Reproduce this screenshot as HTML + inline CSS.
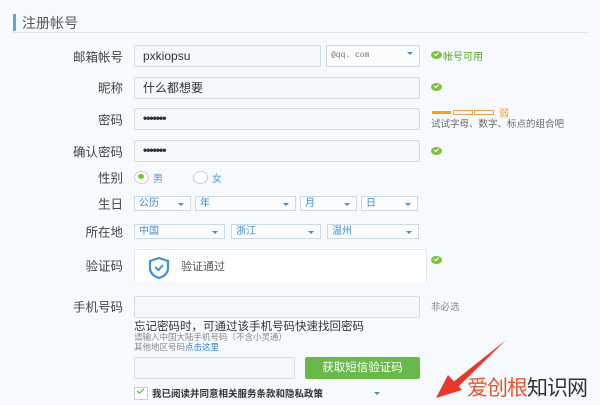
<!DOCTYPE html>
<html><head><meta charset="utf-8"><style>
body{margin:0;width:600px;height:405px;overflow:hidden;background:#f6fafd;font-family:"Liberation Sans","Noto Sans CJK SC",sans-serif;position:relative;color:#333}
.a{position:absolute}
.lbl{position:absolute;right:477px;font-size:12.5px;color:#444;white-space:nowrap;transform:translateY(-50%)}
.in{position:absolute;border:1px solid #d4dce4;background:#f5f8fb;border-radius:2px;box-sizing:border-box;font-size:12px;padding-left:8px}
.sel{position:absolute;border:1px solid #cfd9e3;background:#fafcfe;box-sizing:border-box;font-size:10px;color:#3a8fd0;padding-left:4px;line-height:14px}
.sel:after{content:"";position:absolute;right:6px;top:6px;border:3px solid transparent;border-top:3px solid #3a8fd0}
.ok{position:absolute;width:11px;height:8px;border-radius:50%;background:#7cc23a}
.ok:after{content:"";position:absolute;left:3px;top:1px;width:4px;height:2px;border-left:1.5px solid #fff;border-bottom:1.5px solid #fff;transform:rotate(-45deg)}
</style></head><body>
<div class="a" style="left:13px;top:14px;width:3px;height:17px;background:#5aa9e0"></div>
<div class="a" style="left:22px;top:13px;font-size:14px;color:#555">注册帐号</div>
<div class="a" style="left:13px;top:32px;width:577px;height:1px;background:#e2e8ee"></div>

<div class="lbl" style="top:56px">邮箱帐号</div>
<div class="in" style="left:134px;top:45px;width:187px;height:22px;line-height:20px;font-size:12px">pxkiopsu</div>
<div class="sel" style="left:326px;top:45px;width:94px;height:22px;line-height:20px;color:#777;font-size:8px;font-family:'Liberation Mono',monospace">@qq. com</div>
<div class="ok" style="left:431px;top:51px"></div>
<div class="a" style="left:443px;top:48px;font-size:10px;color:#5aa520">帐号可用</div>

<div class="lbl" style="top:87px">昵称</div>
<div class="in" style="left:134px;top:77px;width:286px;height:22px;line-height:20px">什么都想要</div>
<div class="ok" style="left:431px;top:83px"></div>

<div class="lbl" style="top:119px">密码</div>
<div class="in" style="left:134px;top:108px;width:286px;height:22px;line-height:18px;font-weight:bold;letter-spacing:-1px">•••••••</div>
<div class="a" style="left:432px;top:111px;width:19px;height:3px;background:#f39a3c"></div>
<div class="a" style="left:453px;top:110px;width:18px;height:3px;border:1px solid #f3a04a"></div>
<div class="a" style="left:474px;top:110px;width:18px;height:3px;border:1px solid #f3a04a"></div>
<div class="a" style="left:499px;top:105px;font-size:10px;color:#f39a3c">弱</div>
<div class="a" style="left:431px;top:116px;font-size:9.5px;color:#666;white-space:nowrap">试试字母、数字、标点的组合吧</div>

<div class="lbl" style="top:151px">确认密码</div>
<div class="in" style="left:134px;top:140px;width:286px;height:22px;line-height:18px;font-weight:bold;letter-spacing:-1px">•••••••</div>
<div class="ok" style="left:431px;top:147px"></div>

<div class="lbl" style="top:177px">性别</div>
<div class="a" style="left:134px;top:171px;width:13px;height:11px;border-radius:50%;border:1px solid #ccd;background:#fff"></div>
<div class="a" style="left:138px;top:174px;width:6px;height:5px;border-radius:50%;background:#6cc530"></div>
<div class="a" style="left:153px;top:170px;font-size:10px;color:#5a9bd0">男</div>
<div class="a" style="left:193px;top:171px;width:13px;height:11px;border-radius:50%;border:1px solid #ccd;background:#fff"></div>
<div class="a" style="left:212px;top:170px;font-size:10px;color:#5a9bd0">女</div>

<div class="lbl" style="top:203px">生日</div>
<div class="sel" style="left:134px;top:196px;width:57px;height:15px">公历</div>
<div class="sel" style="left:195px;top:196px;width:101px;height:15px">年</div>
<div class="sel" style="left:300px;top:196px;width:57px;height:15px">月</div>
<div class="sel" style="left:361px;top:196px;width:57px;height:15px">日</div>

<div class="lbl" style="top:231px">所在地</div>
<div class="sel" style="left:134px;top:224px;width:91px;height:15px">中国</div>
<div class="sel" style="left:231px;top:224px;width:90px;height:15px">浙江</div>
<div class="sel" style="left:327px;top:224px;width:92px;height:15px">温州</div>

<div class="lbl" style="top:265px">验证码</div>
<div class="a" style="left:134px;top:249px;width:291px;height:32px;background:#fff;border:1px solid #e4e8ec;border-bottom:none"></div>
<svg class="a" style="left:147px;top:256px" width="24" height="24" viewBox="0 0 24 24"><path d="M3 5 L12 2 L21 5 L21 12 Q21 19 12 22 Q3 19 3 12 Z" fill="none" stroke="#3a8fe0" stroke-width="2.2"/><path d="M8 11 L11.5 14 L16 9" fill="none" stroke="#3a8fe0" stroke-width="2"/></svg>
<div class="a" style="left:181px;top:258px;font-size:11px;color:#555">验证通过</div>
<div class="ok" style="left:431px;top:256px"></div>

<div class="lbl" style="top:306px">手机号码</div>
<div class="in" style="left:134px;top:296px;width:286px;height:22px"></div>
<div class="a" style="left:431px;top:299px;font-size:9.5px;color:#888">非必选</div>
<div class="a" style="left:134px;top:318px;font-size:11.5px;color:#333;white-space:nowrap">忘记密码时，可通过该手机号码快速找回密码</div>
<div class="a" style="left:134px;top:331px;font-size:8.5px;color:#888;white-space:nowrap">请输入中国大陆手机号码（不含小灵通）</div>
<div class="a" style="left:134px;top:341px;font-size:8.5px;color:#888;white-space:nowrap">其他地区号码<span style="color:#2f7fd0">点击这里</span></div>

<div class="in" style="left:134px;top:357px;width:161px;height:22px"></div>
<div class="a" style="left:305px;top:357px;width:115px;height:22px;background:#6ab84a;border-radius:2px;color:#fff;font-size:11.5px;text-align:center;line-height:22px">获取短信验证码</div>

<div class="a" style="left:134px;top:387px;width:12px;height:11px;border:1px solid #ccd;background:#fff"></div>
<div class="a" style="left:137px;top:388px;width:6px;height:3px;border-left:1.5px solid #4cae2c;border-bottom:1.5px solid #4cae2c;transform:rotate(-45deg)"></div>
<div class="a" style="left:152px;top:386px;font-size:9.5px;color:#333;font-weight:bold;white-space:nowrap">我已阅读并同意相关服务条款和隐私政策</div>
<div class="a" style="left:374px;top:392px;border:3px solid transparent;border-top:3px solid #3a8fd0"></div>

<svg class="a" style="left:430px;top:335px" width="85" height="70" viewBox="0 0 85 70"><path d="M76 5 L22 48 L26 54 Z" fill="#e8382c"/><path d="M6 63 L18 40 L32 55 Z" fill="#e8382c"/></svg>
<div class="a" style="left:467px;top:372px;font-size:21px;white-space:nowrap;letter-spacing:-1px"><span style="color:#e8552c">爱创根</span><span style="color:#333">知识网</span></div>
</body></html>
